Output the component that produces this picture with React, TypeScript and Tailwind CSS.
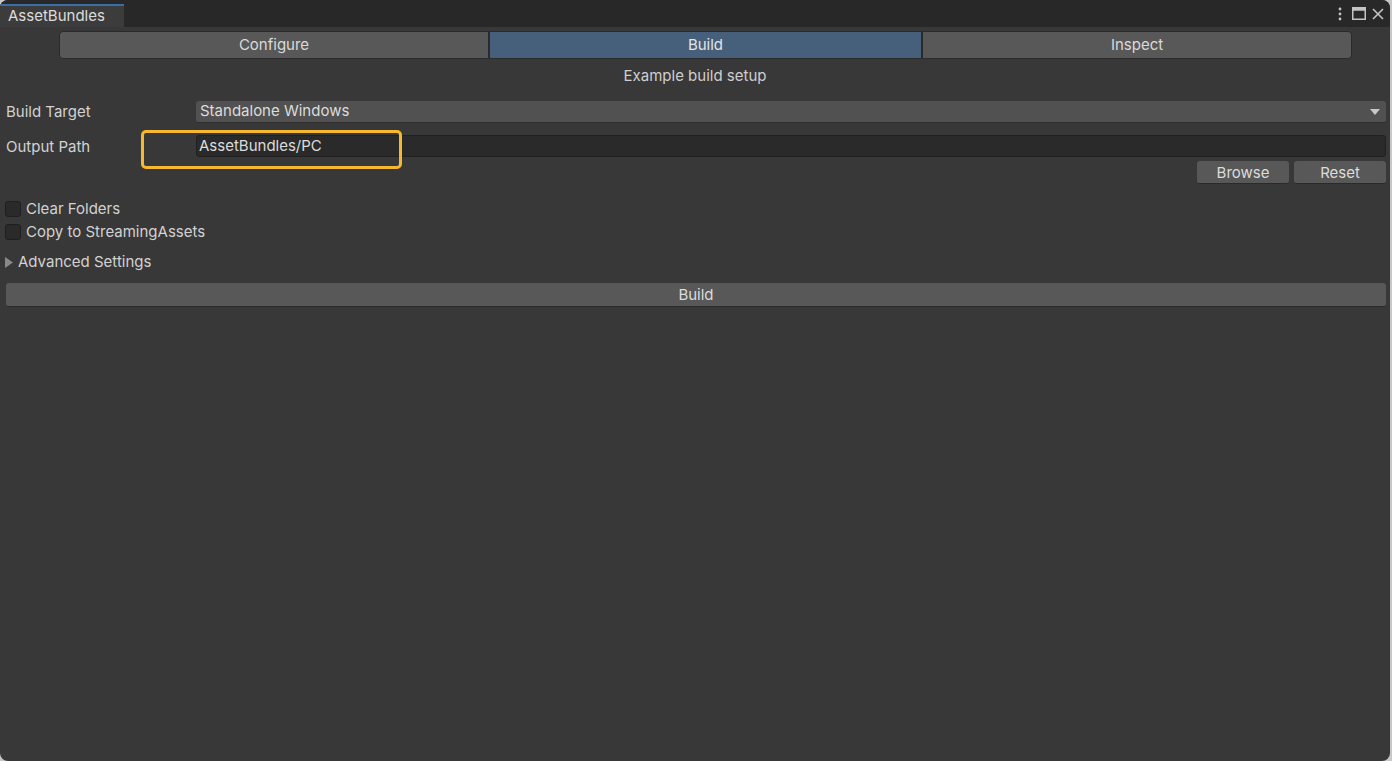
import { useState } from 'react'

const font = { fontFamily: 'Inter, "Noto Sans", sans-serif' }

export default function App() {
  const [tab, setTab] = useState('Build')
  const [clear, setClear] = useState(false)
  const [copy, setCopy] = useState(false)

  return (
    <div className="h-[761px] w-[1392px] bg-[#c8c8c8] overflow-hidden" style={font}>
      <div className="h-full w-[1390px] rounded-[8px] bg-[#383838] overflow-hidden flex flex-col text-[15px] text-[#d2d2d2]">
        {/* title bar */}
        <div className="h-[27px] bg-[#282828] flex items-end justify-between shrink-0">
          <div className="h-[23px] w-[124px] bg-[#3c3c3c] border-t-2 border-[#3a6ea5] flex items-center pl-[8px] text-[#dcdcdc]">
            AssetBundles
          </div>
          <div className="flex items-center gap-[6px] pr-[6px] h-[27px] text-[#c4c4c4]">
            <svg width="4" height="14" viewBox="0 0 4 14">
              <circle cx="2" cy="2" r="1.4" fill="currentColor" />
              <circle cx="2" cy="7" r="1.4" fill="currentColor" />
              <circle cx="2" cy="12" r="1.4" fill="currentColor" />
            </svg>
            <svg width="14" height="13" viewBox="0 0 14 13" className="ml-[4px]">
              <rect x="0.75" y="0.75" width="12.5" height="11.5" fill="none" stroke="currentColor" strokeWidth="1.5" />
              <rect x="0.75" y="0.75" width="12.5" height="3" fill="currentColor" />
            </svg>
            <svg width="12" height="12" viewBox="0 0 12 12">
              <path d="M1 1 L11 11 M11 1 L1 11" stroke="currentColor" strokeWidth="1.6" />
            </svg>
          </div>
        </div>

        {/* toolbar */}
        <div className="flex pl-[59px] pr-[38px] pt-[4px]">
          {['Configure', 'Build', 'Inspect'].map((t, i) => (
            <button
              key={t}
              onClick={() => setTab(t)}
              className={
                'h-[28px] flex-1 flex items-center justify-center border border-[#2a2a2a] pt-[1px] ' +
                (tab === t ? 'bg-[#46607c] text-[#e4e4e4] ' : 'bg-[#585858] text-[#dadada] ') +
                (i === 0 ? 'rounded-l-[4px] ' : '') +
                (i === 2 ? 'rounded-r-[4px] ' : '') +
                (i === 1 ? 'basis-[433px] grow-0' : '')
              }
            >
              {t}
            </button>
          ))}
        </div>

        <div className="text-center mt-[7px] h-[20px] leading-[20px] text-[#cfcfcf]">Example build setup</div>

        {/* fields */}
        <div className="pl-[6px] pr-[4px] mt-[15px] flex flex-col">
          <div className="flex items-center h-[22px]">
            <div className="w-[190px]">Build Target</div>
            <div className="flex-1 h-[22px] bg-[#515151] rounded-[3px] border-b border-[#2e2e2e] flex items-center justify-between pl-[4px] pr-[6px] text-[#dcdcdc]">
              <span>Standalone Windows</span>
              <svg width="10" height="6" viewBox="0 0 10 6">
                <path d="M0 0 H10 L5 6 Z" fill="#c8c8c8" />
              </svg>
            </div>
          </div>

          <div className="flex items-center h-[22px] mt-[12px]">
            <div className="w-[190px] pt-[2px]">Output Path</div>
            <div className="relative flex-1 h-[22px] bg-[#2a2a2a] rounded-[3px] border border-[#212121] flex items-center pl-[2px] pt-[1px] text-[#dcdcdc]">
              AssetBundles/PC
              <div className="absolute left-[-56px] top-[-6px] w-[261px] h-[39px] rounded-[5px] border-[3px] border-[#f6b731]" />
            </div>
          </div>

          <div className="flex justify-end gap-[5px] mt-[4px]">
            <button className="w-[92px] h-[23px] bg-[#585858] rounded-[3px] border-b border-[#2a2a2a] text-[#dcdcdc] pt-[1px]">Browse</button>
            <button className="w-[92px] h-[23px] bg-[#585858] rounded-[3px] border-b border-[#2a2a2a] text-[#dcdcdc] pt-[1px]">Reset</button>
          </div>
        </div>

        <div className="pl-[5px] mt-[17px] flex flex-col gap-[7px]">
          {[
            ['Clear Folders', clear, setClear],
            ['Copy to StreamingAssets', copy, setCopy],
          ].map(([label, v, set]) => (
            <label key={label as string} className="flex items-center gap-[5px] h-[16px] cursor-pointer">
              <span
                onClick={() => (set as (b: boolean) => void)(!(v as boolean))}
                className="w-[16px] h-[16px] bg-[#2a2a2a] border border-[#1f1f1f] rounded-[3px]"
              />
              <span>{label as string}</span>
            </label>
          ))}
        </div>

        <div className="pl-[5px] mt-[14px] flex items-center gap-[4px] h-[16px]">
          <svg width="9" height="11" viewBox="0 0 9 11">
            <path d="M0 0 L8 5.5 L0 11 Z" fill="#8a8a8a" />
          </svg>
          <span>Advanced Settings</span>
        </div>

        <div className="pl-[6px] pr-[4px] mt-[13px]">
          <button className="w-full h-[24px] bg-[#585858] rounded-[3px] border-b border-[#2a2a2a] text-[#dcdcdc] pt-[1px]">Build</button>
        </div>
      </div>
    </div>
  )
}
